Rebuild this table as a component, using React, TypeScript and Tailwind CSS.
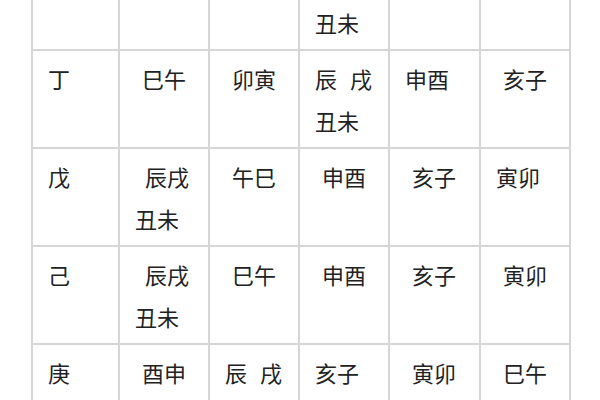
type Line = { t: string; indent?: "none" | "sm" | "md"; spread?: boolean }
type Cell = Line[]

const indentClass = {
  none: "",
  sm: "pl-[7px]",
  md: "pl-[10px]",
}

const one = (t: string, indent: Line["indent"] = "none"): Cell => [{ t, indent }]
const twoLines = (first: Line, second: string): Cell => [first, { t: second }]
const spreadPair: Line = { t: "辰戌", spread: true }
const empty: Cell = []

// first row only shows its lower half, so just the wrapped second line is kept
const rows: Cell[][] = [
  [empty, empty, empty, twoLines({ t: "" }, "丑未"), empty, empty],
  [one("丁"), one("巳午", "sm"), one("卯寅", "sm"), twoLines(spreadPair, "丑未"), one("申酉"), one("亥子", "sm")],
  [one("戊"), twoLines({ t: "辰戌", indent: "md" }, "丑未"), one("午巳", "sm"), one("申酉", "sm"), one("亥子", "sm"), one("寅卯")],
  [one("己"), twoLines({ t: "辰戌", indent: "md" }, "丑未"), one("巳午", "sm"), one("申酉", "sm"), one("亥子", "sm"), one("寅卯", "sm")],
  [one("庚"), one("酉申", "sm"), twoLines(spreadPair, "丑未"), one("亥子"), one("寅卯", "sm"), one("巳午", "sm")],
]

function TableCell({ cell }: { cell: Cell }) {
  return (
    <div className="bg-white pl-[15px] pt-[6px] h-[96px]">
      {cell.map((line, i) =>
        line.spread ? (
          <div key={i} className="flex w-[57px] justify-between">
            {line.t.split("").map((ch, j) => (
              <span key={j}>{ch}</span>
            ))}
          </div>
        ) : (
          <div key={i} className={`h-[42px] ${indentClass[line.indent ?? "none"]}`}>
            {line.t}
          </div>
        )
      )}
    </div>
  )
}

export default function App() {
  return (
    <div className="w-[600px] h-[400px] overflow-hidden bg-white">
      <div
        className="ml-[31px] mt-[-49px] w-[540px] grid grid-cols-[85px_88px_88px_88px_89px_88px] gap-[2px] p-[2px] bg-[#d6d6d6] text-[22px] leading-[42px] text-[#222]"
        style={{ fontFamily: '"Noto Sans CJK SC", "Noto Sans", sans-serif' }}
      >
        {rows.map((row, r) =>
          row.map((cell, c) => <TableCell key={`${r}-${c}`} cell={cell} />)
        )}
      </div>
    </div>
  )
}
